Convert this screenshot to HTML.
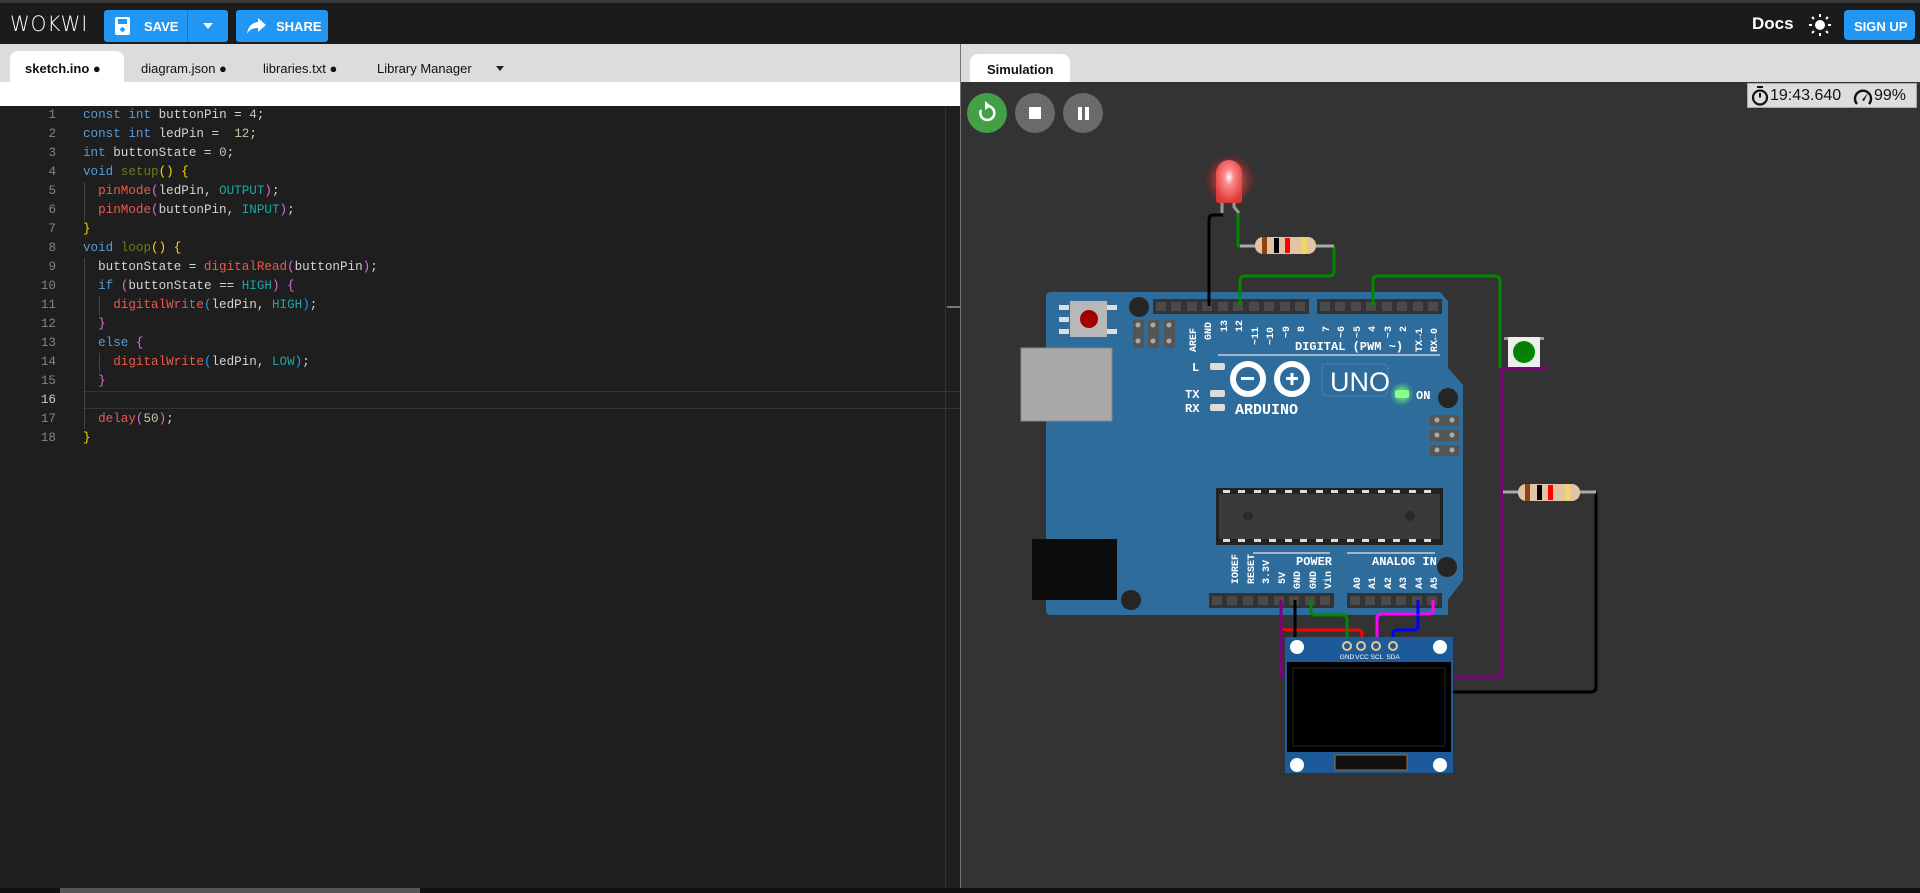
<!DOCTYPE html>
<html><head><meta charset="utf-8">
<style>
*{margin:0;padding:0;box-sizing:border-box}
body{width:1920px;height:893px;overflow:hidden;background:#1e1e1e;font-family:"Liberation Sans",sans-serif;position:relative}
.hdr{position:absolute;left:0;top:0;width:1920px;height:44px;background:#1b1b1b;border-top:3px solid #3a3a3a}
.btn{position:absolute;background:#2196f3;border-radius:3px;color:#fff;font-weight:bold;font-size:13px;height:32px;top:7px}
.tabs{position:absolute;top:44px;height:38px;background:#dcdcdc}
.tab{position:absolute;font-size:13px;color:#111;top:17px}
.code{position:absolute;left:0;top:106px;width:960px;height:782px;background:#1e1e1e;font-family:"Liberation Mono",monospace;font-size:12.6px}
.ln{position:absolute;left:0;width:56px;text-align:right;color:#858585;height:19px;line-height:19px}
.cl{position:absolute;left:83px;color:#d4d4d4;white-space:pre;height:19px;line-height:19px}
.k{color:#569cd6}.n{color:#b5cea8}.f{color:#6b7d1c}.y{color:#ffd700}.p{color:#da70d6}.b{color:#179fff}.r{color:#f0584a}.t{color:#1fa5a5}
</style></head><body>
<div class="hdr">
 <div style="position:absolute;left:10px;top:9px;color:#fff;font-size:21px;letter-spacing:1px;font-family:'DejaVu Sans',sans-serif;font-weight:200;transform:scaleX(.95);transform-origin:left">WOKWI</div>
 <div class="btn" style="left:104px;width:124px">
  <svg width="20" height="20" style="position:absolute;left:9px;top:6px" viewBox="0 0 20 20"><rect x="2" y="1" width="15" height="18" rx="2" fill="#fff"/><rect x="5" y="3" width="9" height="5" fill="#2196f3"/><circle cx="9.5" cy="13.5" r="2.3" fill="#2196f3"/></svg>
  <span style="position:absolute;left:40px;top:9px">SAVE</span>
  <div style="position:absolute;left:83px;top:0;width:1px;height:32px;background:#1a78c2"></div>
  <div style="position:absolute;left:99px;top:13px;width:0;height:0;border-left:5px solid transparent;border-right:5px solid transparent;border-top:6px solid #fff"></div>
 </div>
 <div class="btn" style="left:236px;width:92px">
  <svg width="22" height="20" style="position:absolute;left:9px;top:6px" viewBox="0 0 22 20"><path d="M13 2 L21 9 L13 16 L13 12 C7 12 4 14 2 18 C3 11 6 7 13 6 Z" fill="#fff"/></svg>
  <span style="position:absolute;left:40px;top:9px">SHARE</span>
 </div>
 <div style="position:absolute;left:1752px;top:11px;color:#fff;font-weight:bold;font-size:17px">Docs</div>
 <svg width="24" height="24" style="position:absolute;left:1808px;top:10px" viewBox="0 0 24 24"><circle cx="12" cy="12" r="5" fill="#fff"/><g stroke="#fff" stroke-width="2"><line x1="12" y1="1" x2="12" y2="4"/><line x1="12" y1="20" x2="12" y2="23"/><line x1="1" y1="12" x2="4" y2="12"/><line x1="20" y1="12" x2="23" y2="12"/><line x1="4" y1="4" x2="6" y2="6"/><line x1="18" y1="18" x2="20" y2="20"/><line x1="4" y1="20" x2="6" y2="18"/><line x1="18" y1="6" x2="20" y2="4"/></g></svg>
 <div class="btn" style="left:1844px;width:71px;top:7px;height:30px;border-radius:4px"><span style="position:absolute;left:10px;top:9px">SIGN UP</span></div>
</div>
<div class="tabs" style="left:0;width:960px">
 <div style="position:absolute;left:10px;top:7px;width:114px;height:31px;background:#fff;border-radius:8px 8px 0 0"></div>
 <div class="tab" style="left:25px;font-weight:bold">sketch.ino ●</div>
 <div class="tab" style="left:141px">diagram.json ●</div>
 <div class="tab" style="left:263px">libraries.txt ●</div>
 <div class="tab" style="left:377px">Library Manager</div>
 <div style="position:absolute;left:496px;top:22px;border-left:4px solid transparent;border-right:4px solid transparent;border-top:5px solid #222"></div>
</div>
<div style="position:absolute;left:0;top:82px;width:960px;height:24px;background:#fff"></div>
<div class="tabs" style="left:961px;width:959px">
 <div style="position:absolute;left:9px;top:10px;width:100px;height:28px;background:#fff;border-radius:8px 8px 0 0"></div>
 <div class="tab" style="left:26px;font-weight:bold;top:18px">Simulation</div>
</div>
<div style="position:absolute;left:960px;top:44px;width:1px;height:849px;background:#777"></div>
<div class="code">
 <div style="position:absolute;left:83px;top:285px;width:877px;height:18px;border-top:1px solid #333;border-bottom:1px solid #333"></div>
 <div style="position:absolute;left:945px;top:0;width:1px;height:782px;background:#333"></div>
 <div style="position:absolute;left:947px;top:200px;width:13px;height:2px;background:#777"></div>
 <div style="position:absolute;left:84px;top:76px;width:1px;height:38px;background:#444"></div>
 <div style="position:absolute;left:84px;top:152px;width:1px;height:171px;background:#444"></div>
 <div style="position:absolute;left:99px;top:190px;width:1px;height:19px;background:#444"></div>
 <div style="position:absolute;left:99px;top:247px;width:1px;height:19px;background:#444"></div>
 <div class="ln" style="top:0">1</div><div class="cl" style="top:0"><span class="k">const</span> <span class="k">int</span> buttonPin = <span class="n">4</span>;</div>
 <div class="ln" style="top:19px">2</div><div class="cl" style="top:19px"><span class="k">const</span> <span class="k">int</span> ledPin =  <span class="n">12</span>;</div>
 <div class="ln" style="top:38px">3</div><div class="cl" style="top:38px"><span class="k">int</span> buttonState = <span class="n">0</span>;</div>
 <div class="ln" style="top:57px">4</div><div class="cl" style="top:57px"><span class="k">void</span> <span class="f">setup</span><span class="y">()</span> <span class="y">{</span></div>
 <div class="ln" style="top:76px">5</div><div class="cl" style="top:76px">  <span class="r">pinMode</span><span class="p">(</span>ledPin, <span class="t">OUTPUT</span><span class="p">)</span>;</div>
 <div class="ln" style="top:95px">6</div><div class="cl" style="top:95px">  <span class="r">pinMode</span><span class="p">(</span>buttonPin, <span class="t">INPUT</span><span class="p">)</span>;</div>
 <div class="ln" style="top:114px">7</div><div class="cl" style="top:114px"><span class="y">}</span></div>
 <div class="ln" style="top:133px">8</div><div class="cl" style="top:133px"><span class="k">void</span> <span class="f">loop</span><span class="y">()</span> <span class="y">{</span></div>
 <div class="ln" style="top:152px">9</div><div class="cl" style="top:152px">  buttonState = <span class="r">digitalRead</span><span class="p">(</span>buttonPin<span class="p">)</span>;</div>
 <div class="ln" style="top:171px">10</div><div class="cl" style="top:171px">  <span class="k">if</span> <span class="p">(</span>buttonState == <span class="t">HIGH</span><span class="p">)</span> <span class="p">{</span></div>
 <div class="ln" style="top:190px">11</div><div class="cl" style="top:190px">    <span class="r">digitalWrite</span><span class="b">(</span>ledPin, <span class="t">HIGH</span><span class="b">)</span>;</div>
 <div class="ln" style="top:209px">12</div><div class="cl" style="top:209px">  <span class="p">}</span></div>
 <div class="ln" style="top:228px">13</div><div class="cl" style="top:228px">  <span class="k">else</span> <span class="p">{</span></div>
 <div class="ln" style="top:247px">14</div><div class="cl" style="top:247px">    <span class="r">digitalWrite</span><span class="b">(</span>ledPin, <span class="t">LOW</span><span class="b">)</span>;</div>
 <div class="ln" style="top:266px">15</div><div class="cl" style="top:266px">  <span class="p">}</span></div>
 <div class="ln" style="top:285px;color:#ccc">16</div>
 <div class="ln" style="top:304px">17</div><div class="cl" style="top:304px">  <span class="r">delay</span><span class="p">(</span><span class="n">50</span><span class="p">)</span>;</div>
 <div class="ln" style="top:323px">18</div><div class="cl" style="top:323px"><span class="y">}</span></div>
</div>
<div style="position:absolute;left:0;top:888px;width:1920px;height:5px;background:#111"></div>
<div style="position:absolute;left:60px;top:888px;width:360px;height:5px;background:#555"></div>
<div style="position:absolute;left:961px;top:82px;width:959px;height:806px;background:#333"></div>
<div style="position:absolute;left:1747px;top:83px;width:170px;height:25px;background:#ddd;border:1px solid #aaa;font-size:16px;color:#111">
 <svg width="18" height="20" style="position:absolute;left:3px;top:2px" viewBox="0 0 18 20"><rect x="6" y="0" width="6" height="2" fill="#111"/><circle cx="9" cy="11.5" r="7" fill="none" stroke="#111" stroke-width="2.2"/><line x1="9" y1="11.5" x2="9" y2="7" stroke="#111" stroke-width="2"/></svg>
 <span style="position:absolute;left:22px;top:3px">19:43.640</span>
 <svg width="20" height="18" style="position:absolute;left:105px;top:4px" viewBox="0 0 20 18"><path d="M4 16 A8 8 0 1 1 16 16" fill="none" stroke="#111" stroke-width="2.4"/><path d="M9 12 L15 5 L11 13 Z" fill="#111"/></svg>
 <span style="position:absolute;left:126px;top:3px">99%</span>
</div>
<svg width="1920" height="893" style="position:absolute;left:0;top:0" viewBox="0 0 1920 893">
 <defs><radialGradient id="glow"><stop offset="0" stop-color="#ff9090" stop-opacity="1"/><stop offset=".5" stop-color="#ff5050" stop-opacity=".5"/><stop offset="1" stop-color="#ff0000" stop-opacity="0"/></radialGradient>
 <radialGradient id="led" cx=".5" cy=".4" r=".6"><stop offset="0" stop-color="#fff"/><stop offset=".3" stop-color="#ff8a8a"/><stop offset="1" stop-color="#e03838"/></radialGradient>
 <radialGradient id="gglow"><stop offset="0" stop-color="#a0ff90"/><stop offset="1" stop-color="#60ff60" stop-opacity="0"/></radialGradient></defs>
 <circle cx="987" cy="113" r="20" fill="#43a047"/>
 <path d="M981 110 A7 7 0 1 0 987 106" fill="none" stroke="#fff" stroke-width="2.5"/><path d="M985 101 L991 106 L985 110 Z" fill="#fff"/>
 <circle cx="1035" cy="113" r="20" fill="#6a6a6a"/><rect x="1029" y="107" width="12" height="12" fill="#fff"/>
 <circle cx="1083" cy="113" r="20" fill="#6a6a6a"/><rect x="1078" y="107" width="4" height="13" fill="#fff"/><rect x="1085" y="107" width="4" height="13" fill="#fff"/>
 <path d="M1051 292 L1440 292 L1448 301 L1448 368 L1463 385 L1463 580 L1448 600 L1448 615 L1051 615 Q1046 615 1046 610 L1046 297 Q1046 292 1051 292Z" fill="#2e6c9c"/>
 <rect x="1021" y="348" width="91" height="73" fill="#a9a9a9" stroke="#888"/>
 <rect x="1032" y="539" width="85" height="61" fill="#0c0c0c"/>
 <rect x="1059" y="305" width="10" height="5" fill="#ddd"/><rect x="1059" y="317" width="10" height="5" fill="#ddd"/><rect x="1059" y="329" width="10" height="5" fill="#ddd"/><rect x="1107" y="305" width="10" height="5" fill="#ddd"/><rect x="1107" y="329" width="10" height="5" fill="#ddd"/>
 <rect x="1070" y="301" width="37" height="36" fill="#b8b8b8"/><circle cx="1089" cy="319" r="9" fill="#a00000"/>
 <circle cx="1139" cy="307" r="10" fill="#252525"/><circle cx="1448" cy="398" r="10" fill="#252525"/><circle cx="1131" cy="600" r="10" fill="#252525"/><circle cx="1447" cy="567" r="10" fill="#252525"/>
 <g fill="#555"><rect x="1133" y="320" width="11" height="28"/><rect x="1148" y="320" width="11" height="28"/><rect x="1164" y="320" width="11" height="28"/><rect x="1430" y="415" width="29" height="11"/><rect x="1430" y="430" width="29" height="11"/><rect x="1430" y="445" width="29" height="11"/></g>
 <g fill="#aaa"><circle cx="1138" cy="325" r="2.5"/><circle cx="1138" cy="341" r="2.5"/><circle cx="1153" cy="325" r="2.5"/><circle cx="1153" cy="341" r="2.5"/><circle cx="1169" cy="325" r="2.5"/><circle cx="1169" cy="341" r="2.5"/><circle cx="1437" cy="420" r="2.5"/><circle cx="1452" cy="420" r="2.5"/><circle cx="1437" cy="435" r="2.5"/><circle cx="1452" cy="435" r="2.5"/><circle cx="1437" cy="450" r="2.5"/><circle cx="1452" cy="450" r="2.5"/></g>
 <rect x="1153" y="299" width="156" height="15" fill="#333"/><rect x="1317" y="299" width="125" height="15" fill="#333"/>
 <rect x="1209" y="593" width="125" height="15" fill="#333"/><rect x="1347" y="593" width="95" height="15" fill="#333"/>
 <g fill="#4a4a4a">
  <rect x="1156" y="302" width="10" height="9"/><rect x="1171" y="302" width="10" height="9"/><rect x="1187" y="302" width="10" height="9"/><rect x="1202" y="302" width="10" height="9"/><rect x="1218" y="302" width="10" height="9"/><rect x="1233" y="302" width="10" height="9"/><rect x="1249" y="302" width="10" height="9"/><rect x="1264" y="302" width="10" height="9"/><rect x="1280" y="302" width="10" height="9"/><rect x="1295" y="302" width="10" height="9"/>
  <rect x="1320" y="302" width="10" height="9"/><rect x="1335" y="302" width="10" height="9"/><rect x="1351" y="302" width="10" height="9"/><rect x="1366" y="302" width="10" height="9"/><rect x="1382" y="302" width="10" height="9"/><rect x="1397" y="302" width="10" height="9"/><rect x="1413" y="302" width="10" height="9"/><rect x="1428" y="302" width="10" height="9"/>
  <rect x="1212" y="596" width="10" height="9"/><rect x="1227" y="596" width="10" height="9"/><rect x="1243" y="596" width="10" height="9"/><rect x="1258" y="596" width="10" height="9"/><rect x="1274" y="596" width="10" height="9"/><rect x="1289" y="596" width="10" height="9"/><rect x="1305" y="596" width="10" height="9"/><rect x="1320" y="596" width="10" height="9"/>
  <rect x="1350" y="596" width="10" height="9"/><rect x="1365" y="596" width="10" height="9"/><rect x="1381" y="596" width="10" height="9"/><rect x="1396" y="596" width="10" height="9"/><rect x="1412" y="596" width="10" height="9"/><rect x="1427" y="596" width="10" height="9"/>
 </g>
 <g font-family="Liberation Mono,monospace" font-weight="bold" fill="#fff" font-size="11">
  <g font-size="10">
   <text transform="translate(1196,352) rotate(-90)">AREF</text><text transform="translate(1211,340) rotate(-90)">GND</text><text transform="translate(1227,332) rotate(-90)">13</text><text transform="translate(1242,332) rotate(-90)">12</text><text transform="translate(1258,345) rotate(-90)">~11</text><text transform="translate(1273,345) rotate(-90)">~10</text><text transform="translate(1289,338) rotate(-90)">~9</text><text transform="translate(1304,332) rotate(-90)">8</text>
   <text transform="translate(1329,332) rotate(-90)">7</text><text transform="translate(1344,338) rotate(-90)">~6</text><text transform="translate(1360,338) rotate(-90)">~5</text><text transform="translate(1375,332) rotate(-90)">4</text><text transform="translate(1391,338) rotate(-90)">~3</text><text transform="translate(1406,332) rotate(-90)">2</text><text transform="translate(1422,352) rotate(-90)">TX→1</text><text transform="translate(1437,352) rotate(-90)">RX←0</text>
   <text transform="translate(1238,584) rotate(-90)">IOREF</text><text transform="translate(1254,584) rotate(-90)">RESET</text><text transform="translate(1269,584) rotate(-90)">3.3V</text><text transform="translate(1285,584) rotate(-90)">5V</text><text transform="translate(1300,589) rotate(-90)">GND</text><text transform="translate(1316,589) rotate(-90)">GND</text><text transform="translate(1331,589) rotate(-90)">Vin</text>
   <text transform="translate(1360,589) rotate(-90)">A0</text><text transform="translate(1375,589) rotate(-90)">A1</text><text transform="translate(1391,589) rotate(-90)">A2</text><text transform="translate(1406,589) rotate(-90)">A3</text><text transform="translate(1422,589) rotate(-90)">A4</text><text transform="translate(1437,589) rotate(-90)">A5</text>
  </g>
  <text x="1295" y="350" font-size="12">DIGITAL (PWM ~)</text>
  <text x="1296" y="565" font-size="12">POWER</text><text x="1372" y="565" font-size="12">ANALOG IN</text>
  <text x="1192" y="371" font-size="12">L</text><text x="1185" y="398" font-size="12">TX</text><text x="1185" y="412" font-size="12">RX</text>
  <text x="1416" y="399" font-size="12">ON</text>
  <text x="1235" y="414" font-size="15">ARDUINO</text>
 </g>
 <line x1="1218" y1="355" x2="1440" y2="355" stroke="#ccd" stroke-width="1.5"/>
 <line x1="1253" y1="553" x2="1330" y2="553" stroke="#ccd" stroke-width="1.5"/><line x1="1347" y1="553" x2="1435" y2="553" stroke="#ccd" stroke-width="1.5"/>
 <g fill="#ddd"><rect x="1210" y="363" width="15" height="7" rx="2"/><rect x="1210" y="390" width="15" height="7" rx="2"/><rect x="1210" y="404" width="15" height="7" rx="2"/></g>
 <circle cx="1402" cy="394" r="12" fill="url(#gglow)"/><rect x="1395" y="390" width="14" height="8" rx="2" fill="#8f8"/>
 <circle cx="1248" cy="379" r="15" fill="none" stroke="#fff" stroke-width="6"/><circle cx="1292" cy="379" r="15" fill="none" stroke="#fff" stroke-width="6"/>
 <rect x="1241" y="377" width="13" height="3" fill="#fff"/><rect x="1286" y="377" width="12" height="3" fill="#fff"/><rect x="1290.5" y="373" width="3" height="12" fill="#fff"/>
 <rect x="1322" y="364" width="66" height="32" rx="5" fill="none" stroke="#5a8ab4" stroke-dasharray="2 1"/>
 <text x="1330" y="391" font-family="Liberation Sans,sans-serif" font-size="27" fill="#fff">UNO</text>
 <rect x="1216" y="488" width="227" height="57" fill="#222"/><rect x="1219" y="494" width="221" height="45" fill="#3a3a3a"/>
 <g fill="#ddd"><rect x="1223" y="490" width="7" height="3"/><rect x="1238" y="490" width="7" height="3"/><rect x="1254" y="490" width="7" height="3"/><rect x="1269" y="490" width="7" height="3"/><rect x="1285" y="490" width="7" height="3"/><rect x="1300" y="490" width="7" height="3"/><rect x="1316" y="490" width="7" height="3"/><rect x="1331" y="490" width="7" height="3"/><rect x="1347" y="490" width="7" height="3"/><rect x="1362" y="490" width="7" height="3"/><rect x="1378" y="490" width="7" height="3"/><rect x="1393" y="490" width="7" height="3"/><rect x="1409" y="490" width="7" height="3"/><rect x="1424" y="490" width="7" height="3"/>
 <rect x="1223" y="539" width="7" height="3"/><rect x="1238" y="539" width="7" height="3"/><rect x="1254" y="539" width="7" height="3"/><rect x="1269" y="539" width="7" height="3"/><rect x="1285" y="539" width="7" height="3"/><rect x="1300" y="539" width="7" height="3"/><rect x="1316" y="539" width="7" height="3"/><rect x="1331" y="539" width="7" height="3"/><rect x="1347" y="539" width="7" height="3"/><rect x="1362" y="539" width="7" height="3"/><rect x="1378" y="539" width="7" height="3"/><rect x="1393" y="539" width="7" height="3"/><rect x="1409" y="539" width="7" height="3"/><rect x="1424" y="539" width="7" height="3"/></g>
 <circle cx="1248" cy="516" r="5" fill="#2a2a2a"/><circle cx="1410" cy="516" r="5" fill="#2a2a2a"/>
 <!-- LED -->
 <circle cx="1230" cy="180" r="26" fill="url(#glow)"/>
 <path d="M1216 200 L1216 173 A13 13 0 0 1 1242 173 L1242 200 Q1242 203 1238 203 L1220 203 Q1216 203 1216 200 Z" fill="url(#led)"/>
 <line x1="1222" y1="203" x2="1222" y2="213" stroke="#999" stroke-width="3"/><path d="M1234 203 L1234 207 L1239 213" fill="none" stroke="#999" stroke-width="3"/>
 <g fill="none" stroke-width="3" stroke-linejoin="round">
  <path d="M1223 215 L1213 215 Q1209 215 1209 220 L1209 306" stroke="#000"/>
  <path d="M1238 214 L1238 246 L1255 246" stroke="#080"/>
  <path d="M1334 246 L1334 271 Q1334 276 1329 276 L1245 276 Q1240 276 1240 281 L1240 306" stroke="#080"/>
  <path d="M1373 306 L1373 281 Q1373 276 1378 276 L1495 276 Q1500 276 1500 281 L1500 368" stroke="#080"/>
  <path d="M1547 368 L1507 368 Q1502 368 1502 373 L1502 672 Q1502 677 1497 677 L1286 677 Q1281 677 1281 672 L1281 600" stroke="#800080"/>
  <path d="M1596 492 L1596 687 Q1596 692 1591 692 L1453 692" stroke="#000"/>
  <path d="M1283 628 Q1284 630 1288 630 L1357 630 Q1362 630 1362 635 L1362 646" stroke="#f00"/>
  <path d="M1295 600 L1295 670" stroke="#000"/>
  <path d="M1311 600 L1311 611 Q1311 615 1316 615 L1342 615 Q1347 615 1347 620 L1347 646" stroke="#080"/>
  <path d="M1433 600 L1433 610 Q1433 614 1428 614 L1382 614 Q1377 614 1377 619 L1377 646" stroke="#f0f"/>
  <path d="M1418 600 L1418 626 Q1418 630 1413 630 L1397 630 Q1393 630 1393 635 L1393 646" stroke="#00f"/>
 </g>
 <line x1="1240" y1="246" x2="1334" y2="246" stroke="#aaa" stroke-width="3"/>
 <rect x="1255" y="237" width="61" height="17" rx="8" fill="#e0c4a4"/>
 <rect x="1262" y="237" width="5" height="17" fill="#8b4513"/><rect x="1274" y="238" width="5" height="15" fill="#000"/><rect x="1285" y="238" width="5" height="15" fill="#f00"/><rect x="1302" y="237" width="5" height="17" fill="#f0d860"/>
 <line x1="1503" y1="492" x2="1596" y2="492" stroke="#aaa" stroke-width="3"/>
 <rect x="1518" y="484" width="62" height="17" rx="8" fill="#e0c4a4"/>
 <rect x="1525" y="484" width="5" height="17" fill="#8b4513"/><rect x="1537" y="485" width="5" height="15" fill="#000"/><rect x="1548" y="485" width="5" height="15" fill="#f00"/><rect x="1565" y="484" width="5" height="17" fill="#f0d860"/>
 <rect x="1504" y="337" width="40" height="3" fill="#999"/><rect x="1508" y="337" width="32" height="30" fill="#eee"/>
 <circle cx="1524" cy="352" r="11" fill="#080"/><circle cx="1522" cy="350" r="7" fill="#0a7a0a"/>
 <rect x="1285" y="637" width="168" height="136" fill="#1d5a9a"/>
 <rect x="1287" y="662" width="164" height="90" fill="#000"/><rect x="1293" y="668" width="152" height="78" fill="none" stroke="#222"/>
 <rect x="1335" y="755" width="72" height="15" fill="#111" stroke="#a07030"/>
 <g fill="#fff"><circle cx="1297" cy="647" r="7"/><circle cx="1440" cy="647" r="7"/><circle cx="1297" cy="765" r="7"/><circle cx="1440" cy="765" r="7"/></g>
 <g fill="none" stroke="#e8c888" stroke-width="2"><circle cx="1347" cy="646" r="4"/><circle cx="1361" cy="646" r="4"/><circle cx="1376" cy="646" r="4"/><circle cx="1393" cy="646" r="4"/></g>
 <g font-family="Liberation Sans,sans-serif" font-size="6.5" fill="#fff" text-anchor="middle"><text x="1347" y="659">GND</text><text x="1362" y="659">VCC</text><text x="1377" y="659">SCL</text><text x="1393" y="659">SDA</text></g>
</svg>
</body></html>
